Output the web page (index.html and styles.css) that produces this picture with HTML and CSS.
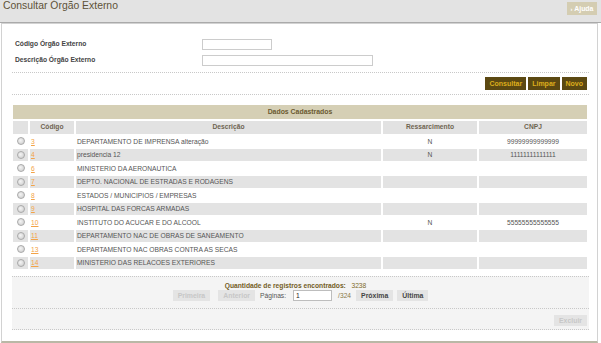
FILE: index.html
```html
<!DOCTYPE html>
<html lang="pt-BR">
<head>
<meta charset="utf-8">
<title>Consultar Órgão Externo</title>
<link rel="stylesheet" href="styles.css">
</head>
<body>
<div class="topbar">
  <h1 class="title">Consultar Órgão Externo</h1>
  <a class="help" href="#"><span class="help-arrow">›</span> Ajuda</a>
</div>
<div class="panel">
  <div class="form">
    <label class="lbl">Código Órgão Externo</label>
    <span class="field"><input class="inp inp-short" type="text"></span>
    <label class="lbl">Descrição Órgão Externo</label>
    <span class="field"><input class="inp inp-long" type="text"></span>
  </div>
  <div class="inner">
    <div class="actions">
      <button class="btn-dark">Consultar</button>
      <button class="btn-dark">Limpar</button>
      <button class="btn-dark">Novo</button>
    </div>
    <table class="grid">
      <colgroup>
        <col class="w-radio">
        <col class="w-code">
        <col class="w-desc">
        <col class="w-res">
        <col class="w-cnpj">
      </colgroup>
      <thead>
        <tr><th class="caption" colspan="5">Dados Cadastrados</th></tr>
        <tr class="cols">
          <th class="c-radio"></th>
          <th class="c-code">Código</th>
          <th class="c-desc">Descrição</th>
          <th class="c-res">Ressarcimento</th>
          <th class="c-cnpj">CNPJ</th>
        </tr>
      </thead>
      <tbody>
        <tr><td class="c-radio"><span class="radio"></span></td><td class="c-code"><a href="#">3</a></td><td class="c-desc">DEPARTAMENTO DE IMPRENSA alteração</td><td class="c-res">N</td><td class="c-cnpj">99999999999999</td></tr>
        <tr class="alt"><td class="c-radio"><span class="radio"></span></td><td class="c-code"><a href="#">4</a></td><td class="c-desc">presidencia 12</td><td class="c-res">N</td><td class="c-cnpj">11111111111111</td></tr>
        <tr><td class="c-radio"><span class="radio"></span></td><td class="c-code"><a href="#">6</a></td><td class="c-desc">MINISTERIO DA AERONAUTICA</td><td class="c-res"></td><td class="c-cnpj"></td></tr>
        <tr class="alt"><td class="c-radio"><span class="radio"></span></td><td class="c-code"><a href="#">7</a></td><td class="c-desc">DEPTO. NACIONAL DE ESTRADAS E RODAGENS</td><td class="c-res"></td><td class="c-cnpj"></td></tr>
        <tr><td class="c-radio"><span class="radio"></span></td><td class="c-code"><a href="#">8</a></td><td class="c-desc">ESTADOS / MUNICIPIOS / EMPRESAS</td><td class="c-res"></td><td class="c-cnpj"></td></tr>
        <tr class="alt"><td class="c-radio"><span class="radio"></span></td><td class="c-code"><a href="#">9</a></td><td class="c-desc">HOSPITAL DAS FORCAS ARMADAS</td><td class="c-res"></td><td class="c-cnpj"></td></tr>
        <tr><td class="c-radio"><span class="radio"></span></td><td class="c-code"><a href="#">10</a></td><td class="c-desc">INSTITUTO DO ACUCAR E DO ALCOOL</td><td class="c-res">N</td><td class="c-cnpj">55555555555555</td></tr>
        <tr class="alt"><td class="c-radio"><span class="radio"></span></td><td class="c-code"><a href="#">11</a></td><td class="c-desc">DEPARTAMENTO NAC DE OBRAS DE SANEAMENTO</td><td class="c-res"></td><td class="c-cnpj"></td></tr>
        <tr><td class="c-radio"><span class="radio"></span></td><td class="c-code"><a href="#">13</a></td><td class="c-desc">DEPARTAMENTO NAC OBRAS CONTRA AS SECAS</td><td class="c-res"></td><td class="c-cnpj"></td></tr>
        <tr class="alt"><td class="c-radio"><span class="radio"></span></td><td class="c-code"><a href="#">14</a></td><td class="c-desc">MINISTERIO DAS RELACOES EXTERIORES</td><td class="c-res"></td><td class="c-cnpj"></td></tr>
      </tbody>
    </table>
    <div class="pager">
      <div class="count"><b>Quantidade de registros encontrados:</b>&nbsp;&nbsp; 3238</div>
      <div class="pager-row">
        <button class="btn-grey" disabled>Primeira</button>
        <button class="btn-grey prev" disabled>Anterior</button>
        <span class="pg-label">Páginas:</span>
        <input class="pg-input" type="text" value="1">
        <span class="pg-total">/324</span>
        <button class="btn-grey on">Próxima</button>
        <button class="btn-grey on">Última</button>
      </div>
    </div>
    <div class="footer-bar">
      <button class="btn-grey" disabled>Excluir</button>
    </div>
  </div>
</div>
</body>
</html>
```
FILE: styles.css
```css
html, body {
  margin: 0;
  padding: 0;
  background: #ffffff;
}
body {
  font-family: "Liberation Sans", Arial, sans-serif;
  font-size: 6.7px;
  color: #555555;
  width: 601px;
  height: 343px;
  overflow: hidden;
}
.topbar {
  height: 22px;
  background: #e3e3e3;
  border-bottom: 1px solid #aaaaaa;
  display: flex;
  justify-content: space-between;
  align-items: flex-start;
  padding: 0 4px 0 3px;
}
.title {
  margin: 0;
  font-size: 10.4px;
  line-height: 12px;
  font-weight: normal;
  color: #5e5238;
}
.help {
  margin-top: 2px;
  height: 13px;
  width: 30px;
  box-sizing: border-box;
  background: #d4cdb2;
  color: #ffffff;
  font-weight: bold;
  font-size: 6.9px;
  line-height: 13px;
  text-decoration: none;
  text-align: center;
}
.help-arrow {
  font-size: 6px;
}
.panel {
  margin: 0 3px 0 1px;
  border: 1px solid #d2d2d2;
  border-bottom: 2px solid #b9b8a6;
  background: #ffffff;
  padding-bottom: 11px;
}
.form {
  display: grid;
  grid-template-columns: 187px auto;
  grid-auto-rows: 16px;
  align-items: center;
  padding: 12px 0 0 13px;
}
.lbl {
  font-weight: bold;
  font-size: 6.7px;
  color: #444444;
  margin-top: -2px;
}
.field {
  display: flex;
}
.inp {
  height: 11px;
  box-sizing: border-box;
  border: 1px solid #cccccc;
  padding: 0;
  margin: 0;
  background: #ffffff;
}
.inp-short { width: 70px; }
.inp-long { width: 171px; }
.inner {
  margin: 4px 8px 0 10px;
}
.actions {
  border-top: 1px dotted #c8c8c8;
  border-bottom: 1px dotted #c8c8c8;
  display: flex;
  justify-content: flex-end;
  gap: 2px;
  padding: 4px 2px 4px 0;
}
.btn-dark {
  height: 13px;
  border: 0;
  margin: 0;
  padding: 0 4px;
  background: #5c4912;
  color: #dcae1c;
  font-family: "Liberation Sans", Arial, sans-serif;
  font-weight: bold;
  font-size: 7px;
  line-height: 13px;
}
.grid {
  margin: 8px 0 0 -1px;
  width: 578px;
  border-collapse: separate;
  border-spacing: 2px;
  table-layout: fixed;
}
.w-radio { width: 15px; }
.w-code { width: 44px; }
.w-desc { width: 305px; }
.w-res { width: 94px; }
.w-cnpj { width: 108px; }
.grid th, .grid td {
  padding: 0;
  height: 11.5px;
  line-height: 11.5px;
  white-space: nowrap;
  overflow: hidden;
}
.caption {
  background: #d5cfb5;
  color: #6b5a30;
  font-weight: bold;
  font-size: 6.9px;
  text-align: center;
  height: 13.5px !important;
}
.cols th {
  background: #e2e2e2;
  color: #6e6450;
  font-weight: bold;
  font-size: 6.7px;
  height: 13px;
  text-align: center;
}
.c-radio { text-align: center; }
.c-res { text-align: center; }
.c-cnpj { text-align: center; }
td.c-code { padding-left: 1px; text-align: left; }
td.c-desc { padding-left: 1px; text-align: left; }
.alt td {
  background: #e3e3e3;
}
.radio {
  display: inline-block;
  width: 6px;
  height: 6px;
  border-radius: 50%;
  border: 1px solid #a9a9a9;
  background: radial-gradient(circle at 40% 40%, #f4f4f4, #c9c9c9);
  vertical-align: middle;
  margin-top: -1px;
}
.c-code a {
  color: #f3a347;
  text-decoration: underline;
}
.pager {
  margin-top: 5px;
  border-top: 1px dotted #c8c8c8;
  border-bottom: 1px dotted #c8c8c8;
  background: #f4f4f4;
  padding: 4px 0 6px;
  text-align: center;
}
.count {
  line-height: 9px;
  color: #7d6a2a;
  padding-right: 10px;
}
.count b {
  color: #735d1f;
}
.pager-row {
  display: flex;
  justify-content: center;
  align-items: center;
  height: 12px;
  gap: 4px;
}
.btn-grey {
  height: 11px;
  border: 0;
  margin: 0;
  padding: 0 5px;
  background: #e4e4e4;
  color: #c7c7c7;
  font-family: "Liberation Sans", Arial, sans-serif;
  font-weight: bold;
  font-size: 6.9px;
  line-height: 11px;
}
.btn-grey.prev {
  margin-left: 4px;
}
.btn-grey.on {
  color: #444444;
}
.pg-label {
  color: #555555;
  margin: 0 1px;
}
.pg-input {
  width: 39px;
  height: 11px;
  box-sizing: border-box;
  border: 1px solid #bdbdbd;
  padding: 0 2px;
  margin: 0 2px;
  font-family: "Liberation Sans", Arial, sans-serif;
  font-size: 6.7px;
  color: #222222;
  background: #ffffff;
}
.pg-total {
  color: #8a7a4a;
  margin-right: 1px;
}
.footer-bar {
  background: #f4f4f4;
  border-bottom: 1px dotted #c8c8c8;
  display: flex;
  justify-content: flex-end;
  padding: 6px 2px 3px 0;
}
```
